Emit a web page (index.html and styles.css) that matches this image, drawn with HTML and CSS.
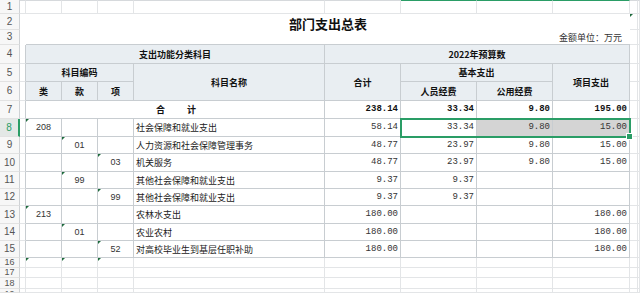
FILE: index.html
```html
<!DOCTYPE html>
<html lang="zh-CN">
<head>
<meta charset="utf-8">
<title>部门支出总表</title>
<link rel="stylesheet" href="styles.css">
</head>
<body>
<div class="sheet">
  <!-- row 1 -->
  <div class="c rh">1</div>
  <div class="c top"></div><div class="c top"></div><div class="c top"></div><div class="c top"></div><div class="c top"></div><div class="c top"></div>
  <div class="c top-sel"></div><div class="c top-sel"></div><div class="c top-sel"></div>
  <div class="c top"></div><div class="c top"></div>
  <!-- row 2 -->
  <div class="c rh">2</div>
  <div class="c blank"></div>
  <div class="c blank title s8">部门支出总表</div>
  <div class="c mk"></div><div class="c"></div>
  <!-- row 3 -->
  <div class="c rh">3</div>
  <div class="c blank"></div>
  <div class="c unit s8">金额单位：万元</div>
  <div class="c"></div><div class="c"></div>
  <!-- row 4 -->
  <div class="c rh">4</div>
  <div class="c ta"></div>
  <div class="c t hd s4">支出功能分类科目</div>
  <div class="c t hd s4">2022年预算数</div>
  <div class="c"></div><div class="c"></div>
  <!-- row 5 -->
  <div class="c rh">5</div>
  <div class="c ta"></div>
  <div class="c t hd s3">科目编码</div>
  <div class="c t hd rs2">科目名称</div>
  <div class="c t hd rs2">合计</div>
  <div class="c t hd s2">基本支出</div>
  <div class="c t hd rs2">项目支出</div>
  <div class="c"></div><div class="c"></div>
  <!-- row 6 -->
  <div class="c rh">6</div>
  <div class="c ta"></div>
  <div class="c t hd">类</div>
  <div class="c t hd">款</div>
  <div class="c t hd">项</div>
  <div class="c t hd">人员经费</div>
  <div class="c t hd">公用经费</div>
  <div class="c"></div><div class="c"></div>
  <!-- row 7 -->
  <div class="c rh">7</div>
  <div class="c ta"></div>
  <div class="c t s4 total"><span>合</span><span>计</span></div>
  <div class="c t n b">238.14</div>
  <div class="c t n b">33.34</div>
  <div class="c t n b">9.80</div>
  <div class="c t n b">195.00</div>
  <div class="c"></div><div class="c"></div>
  <!-- row 8 -->
  <div class="c rh act">8</div>
  <div class="c ta"></div>
  <div class="c t code mk">208</div>
  <div class="c t code"></div>
  <div class="c t code"></div>
  <div class="c t name">社会保障和就业支出</div>
  <div class="c t n">58.14</div>
  <div class="c t n sel">33.34<div class="sel-box"></div></div>
  <div class="c t n gray">9.80</div>
  <div class="c t n gray">15.00</div>
  <div class="c"></div><div class="c"></div>
  <!-- row 9 -->
  <div class="c rh">9</div>
  <div class="c ta"></div>
  <div class="c t code"></div>
  <div class="c t code mk">01</div>
  <div class="c t code"></div>
  <div class="c t name">人力资源和社会保障管理事务</div>
  <div class="c t n">48.77</div>
  <div class="c t n">23.97</div>
  <div class="c t n">9.80</div>
  <div class="c t n">15.00</div>
  <div class="c"></div><div class="c"></div>
  <!-- row 10 -->
  <div class="c rh">10</div>
  <div class="c ta"></div>
  <div class="c t code"></div>
  <div class="c t code"></div>
  <div class="c t code mk">03</div>
  <div class="c t name">机关服务</div>
  <div class="c t n">48.77</div>
  <div class="c t n">23.97</div>
  <div class="c t n">9.80</div>
  <div class="c t n">15.00</div>
  <div class="c"></div><div class="c"></div>
  <!-- row 11 -->
  <div class="c rh">11</div>
  <div class="c ta"></div>
  <div class="c t code"></div>
  <div class="c t code mk">99</div>
  <div class="c t code"></div>
  <div class="c t name">其他社会保障和就业支出</div>
  <div class="c t n">9.37</div>
  <div class="c t n">9.37</div>
  <div class="c t n"></div>
  <div class="c t n"></div>
  <div class="c"></div><div class="c"></div>
  <!-- row 12 -->
  <div class="c rh">12</div>
  <div class="c ta"></div>
  <div class="c t code"></div>
  <div class="c t code"></div>
  <div class="c t code mk">99</div>
  <div class="c t name">其他社会保障和就业支出</div>
  <div class="c t n">9.37</div>
  <div class="c t n">9.37</div>
  <div class="c t n"></div>
  <div class="c t n"></div>
  <div class="c"></div><div class="c"></div>
  <!-- row 13 -->
  <div class="c rh">13</div>
  <div class="c ta"></div>
  <div class="c t code mk">213</div>
  <div class="c t code"></div>
  <div class="c t code"></div>
  <div class="c t name">农林水支出</div>
  <div class="c t n">180.00</div>
  <div class="c t n"></div>
  <div class="c t n"></div>
  <div class="c t n">180.00</div>
  <div class="c"></div><div class="c"></div>
  <!-- row 14 -->
  <div class="c rh">14</div>
  <div class="c ta"></div>
  <div class="c t code"></div>
  <div class="c t code mk">01</div>
  <div class="c t code"></div>
  <div class="c t name">农业农村</div>
  <div class="c t n">180.00</div>
  <div class="c t n"></div>
  <div class="c t n"></div>
  <div class="c t n">180.00</div>
  <div class="c"></div><div class="c"></div>
  <!-- row 15 -->
  <div class="c rh">15</div>
  <div class="c ta"></div>
  <div class="c t code"></div>
  <div class="c t code"></div>
  <div class="c t code mk">52</div>
  <div class="c t name">对高校毕业生到基层任职补助</div>
  <div class="c t n">180.00</div>
  <div class="c t n"></div>
  <div class="c t n"></div>
  <div class="c t n">180.00</div>
  <div class="c"></div><div class="c"></div>
  <!-- row 16 -->
  <div class="c rh sm">16</div>
  <div class="c"></div>
  <div class="c mk"></div><div class="c mk"></div><div class="c mk"></div>
  <div class="c"></div><div class="c"></div><div class="c"></div><div class="c"></div><div class="c"></div><div class="c"></div><div class="c"></div>
  <!-- row 17 -->
  <div class="c rh sm">17</div>
  <div class="c"></div><div class="c"></div><div class="c"></div><div class="c"></div><div class="c"></div><div class="c"></div><div class="c"></div><div class="c"></div><div class="c"></div><div class="c"></div><div class="c"></div>
  <!-- row 18 -->
  <div class="c rh sm">18</div>
  <div class="c"></div><div class="c"></div><div class="c"></div><div class="c"></div><div class="c"></div><div class="c"></div><div class="c"></div><div class="c"></div><div class="c"></div><div class="c"></div><div class="c"></div>
  <!-- row 19 -->
  <div class="c rh sm last">19</div>
  <div class="c"></div><div class="c"></div><div class="c"></div><div class="c"></div><div class="c"></div><div class="c"></div><div class="c"></div><div class="c"></div><div class="c"></div><div class="c"></div><div class="c"></div>
</div>
</body>
</html>
```

FILE: styles.css
```css
* { box-sizing: border-box; margin: 0; padding: 0; }
html, body { width: 640px; height: 293px; overflow: hidden; background: #fff; }
body {
  font-family: "Noto Sans CJK SC", "Noto Sans", sans-serif;
  font-size: 9px;
  color: #222;
}
.sheet {
  display: grid;
  grid-template-columns: 20px 6px 36px 36px 36px 191px 76px 76px 76px 77px 8px 1fr;
  grid-template-rows: 14px 16px 15px 19px 18px 19px 18px 18px 17px 18px 17px 17px 18px 17px 17px 10px 10px 11px 1fr;
  height: 293px;
}
.c {
  border-right: 1px solid #e3e5e7;
  border-bottom: 1px solid #e3e5e7;
  display: flex;
  align-items: center;
  min-width: 0;
  white-space: nowrap;
  overflow: hidden;
  line-height: 1;
}
.top { border-top: 1px solid #d6d9dc; }
.top-sel { border-top: 1px solid #2a9d66; }
.rh {
  background: #f7f7f7;
  border-right: 1px solid #cfd2d5;
  border-bottom: 1px solid #e2e2e2;
  justify-content: center;
  font-family: "Liberation Sans", Arial, sans-serif;
  font-size: 10px;
  color: #555;
}
.rh.sm { font-size: 9px; }
.rh.last { align-items: flex-start; padding-top: 1px; }
.rh.act {
  background: #e3e8e6;
  color: #2a9d66;
  border-right: 2px solid #2a9d66;
}
.blank { border-right: none; border-bottom: none; }
.s2 { grid-column: span 2; }
.s3 { grid-column: span 3; }
.s4 { grid-column: span 4; }
.s8 { grid-column: span 8; }
.rs2 { grid-row: span 2; }
.title {
  justify-content: center;
  font-size: 13px;
  font-weight: 700;
  color: #111;
  overflow: visible;
  padding-top: 2px;
}
.unit {
  justify-content: flex-end;
  padding-right: 8px;
  border-right: none;
  border-bottom: 1px solid #c8cdd1;
  color: #333;
}
.ta { border-right: 1px solid #c8cdd1; }
.t {
  border-right: 1px solid #c8cdd1;
  border-bottom: 1px solid #c8cdd1;
}
.hd {
  background: #e9eef2;
  justify-content: center;
  font-weight: 700;
  color: #111;
}
.total {
  justify-content: center;
  gap: 22px;
  font-weight: 700;
  color: #111;
  padding-left: 2px;
}
.n {
  justify-content: flex-end;
  padding-right: 2px;
  font-family: "Liberation Mono", "DejaVu Sans Mono", monospace;
  font-size: 9px;
  color: #333;
}
.b { font-weight: 700; color: #111; }
.code {
  justify-content: center;
  font-family: "Liberation Sans", Arial, sans-serif;
  font-size: 9px;
  color: #333;
}
.name {
  padding-left: 2px;
  color: #222;
}
.gray { background: #d4d4d4; }
.mk { position: relative; }
.mk::before {
  content: "";
  position: absolute;
  left: 0;
  top: 0;
  border-top: 3px solid #1e6b3c;
  border-right: 3px solid transparent;
}
.sel { position: relative; overflow: visible; }
.sel-box {
  position: absolute;
  left: -1px;
  top: -1px;
  width: 231px;
  height: 20px;
  border: 2px solid #2a9d66;
  z-index: 3;
  pointer-events: none;
}
.sel-box::after {
  content: "";
  position: absolute;
  right: -4px;
  bottom: -4px;
  width: 5px;
  height: 5px;
  background: #2a9d66;
  border: 1px solid #fff;
}
```
